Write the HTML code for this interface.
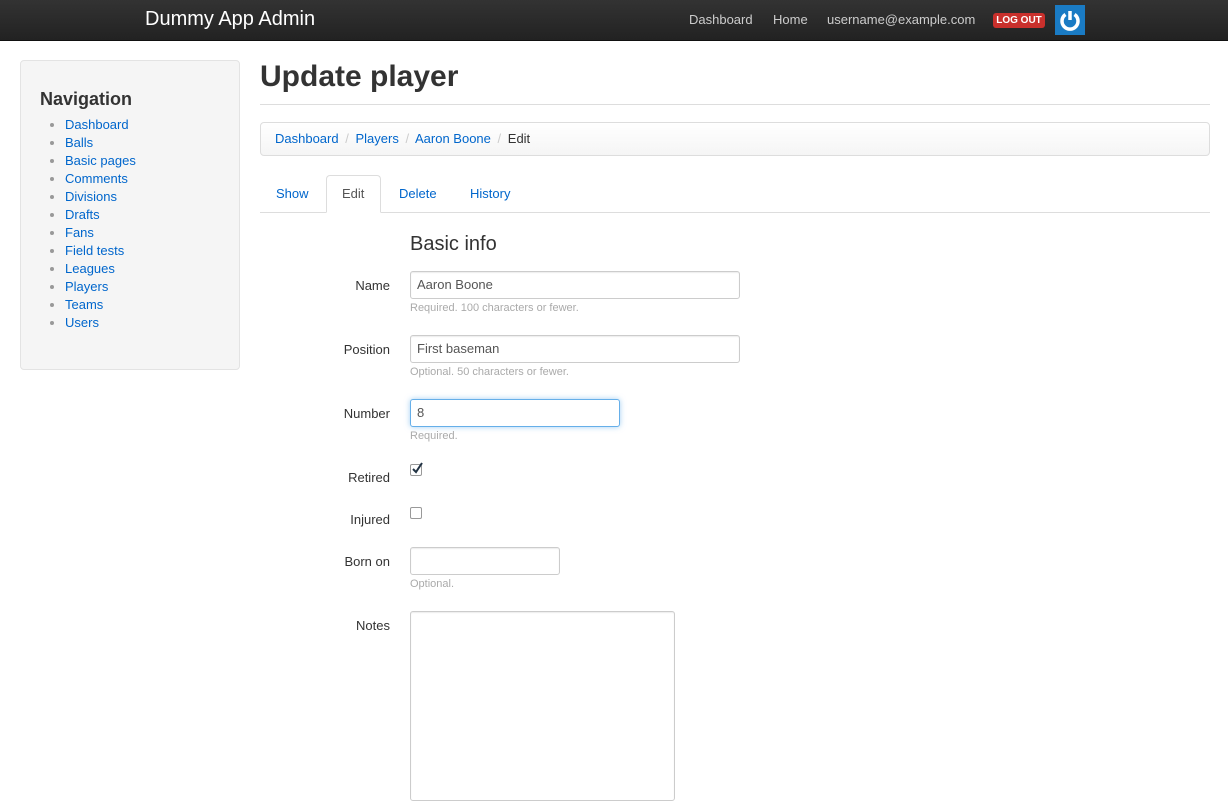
<!DOCTYPE html>
<html><head><style>
*{box-sizing:border-box;margin:0;padding:0}
body{width:1228px;height:784px;overflow:hidden;background:#fff;font-family:"Liberation Sans",Arial,sans-serif;font-size:13px;color:#333;position:relative}
.a{position:absolute}
a{color:#0066cc;text-decoration:none}
.nav{top:0;left:0;width:1228px;height:41px;background:linear-gradient(#333,#222);border-bottom:1px solid #111}
.nav span{position:absolute;color:#ccc;font-size:13px;top:12px}
.side{left:20px;top:60px;width:220px;height:310px;background:#f5f5f5;border:1px solid #e3e3e3;border-radius:4px}
.side h3{position:absolute;left:19px;top:28px;font-size:18px;color:#333}
.side ul{position:absolute;left:44px;top:55px;list-style:disc;color:#999}
.side li{line-height:18px;font-size:13px}
.lbl{width:130px;text-align:right;left:260px;font-size:13px}
.inp{left:410px;height:28px;border:1px solid #ccc;border-radius:3px;background:#fff;padding:5px 6px;color:#555;font-size:13px;box-shadow:inset 0 1px 1px rgba(0,0,0,.075)}
.help{left:410px;font-size:11px;color:#aaa}
.cb{left:410px;width:12px;height:12px;border:1px solid #999;border-radius:2px;background:#fff}
.sep{color:#ccc;padding:0 3px}
</style></head><body>
<div class="a nav">
<span style="left:145px;top:8px;font-size:20px;color:#fff">Dummy App Admin</span>
<span style="left:689px">Dashboard</span>
<span style="left:773px">Home</span>
<span style="left:827px">username@example.com</span>
<div class="a" style="left:993px;top:13px;width:52px;height:15px;background:#c9302c;border-radius:3px;color:#fff;font-size:10px;font-weight:bold;text-align:center;line-height:15px">LOG OUT</div>
<div class="a" style="left:1055px;top:5px;width:30px;height:30px;background:#1a7bc4">
<svg width="30" height="30" viewBox="0 0 30 30"><path d="M10.5 9.5A8 8 0 1 0 19.5 9.5" fill="none" stroke="#fff" stroke-width="3.5"/><path d="M15 6v9" stroke="#fff" stroke-width="3.5"/></svg></div>
</div>
<div class="a side"><h3>Navigation</h3>
<ul><li><a>Dashboard</a></li><li><a>Balls</a></li><li><a>Basic pages</a></li><li><a>Comments</a></li><li><a>Divisions</a></li><li><a>Drafts</a></li><li><a>Fans</a></li><li><a>Field tests</a></li><li><a>Leagues</a></li><li><a>Players</a></li><li><a>Teams</a></li><li><a>Users</a></li></ul></div>
<div class="a" style="left:260px;top:60px;font-size:30px;font-weight:bold;color:#333">Update player</div>
<div class="a" style="left:260px;top:104px;width:950px;border-top:1px solid #ddd"></div>
<div class="a" style="left:260px;top:122px;width:950px;height:34px;border:1px solid #ddd;border-radius:4px;background:linear-gradient(#fff,#f5f5f5);padding:8px 14px"><a>Dashboard</a> <span class="sep">/</span> <a>Players</a> <span class="sep">/</span> <a>Aaron Boone</a> <span class="sep">/</span> Edit</div>
<div class="a" style="left:260px;top:212px;width:950px;border-top:1px solid #ddd"></div>
<div class="a" style="left:326px;top:175px;width:55px;height:38px;border:1px solid #ddd;border-bottom:1px solid #fff;border-radius:4px 4px 0 0;background:#fff"></div>
<a class="a" style="left:276px;top:186px">Show</a>
<span class="a" style="left:342px;top:186px;color:#555">Edit</span>
<a class="a" style="left:399px;top:186px">Delete</a>
<a class="a" style="left:470px;top:186px">History</a>
<div class="a" style="left:410px;top:233px;font-size:20px;color:#333">Basic info</div>
<div class="a lbl" style="top:278px">Name</div>
<div class="a inp" style="top:271px;width:330px">Aaron Boone</div>
<div class="a help" style="top:302px">Required. 100 characters or fewer.</div>
<div class="a lbl" style="top:342px">Position</div>
<div class="a inp" style="top:335px;width:330px">First baseman</div>
<div class="a help" style="top:366px">Optional. 50 characters or fewer.</div>
<div class="a lbl" style="top:406px">Number</div>
<div class="a inp" style="top:399px;width:210px;border-color:#66afe9;box-shadow:0 0 6px rgba(102,175,233,.6)">8</div>
<div class="a help" style="top:430px">Required.</div>
<div class="a lbl" style="top:470px">Retired</div>
<div class="a cb" style="top:464px"><svg class="a" style="left:0;top:-3px" width="13" height="13"><path d="M2 7l3 3 6-9" fill="none" stroke="#234" stroke-width="2"/></svg></div>
<div class="a lbl" style="top:512px">Injured</div>
<div class="a cb" style="top:507px"></div>
<div class="a lbl" style="top:554px">Born on</div>
<div class="a inp" style="top:547px;width:150px"></div>
<div class="a help" style="top:578px">Optional.</div>
<div class="a lbl" style="top:618px">Notes</div>
<div class="a inp" style="top:611px;width:265px;height:190px"></div>
</body></html>
